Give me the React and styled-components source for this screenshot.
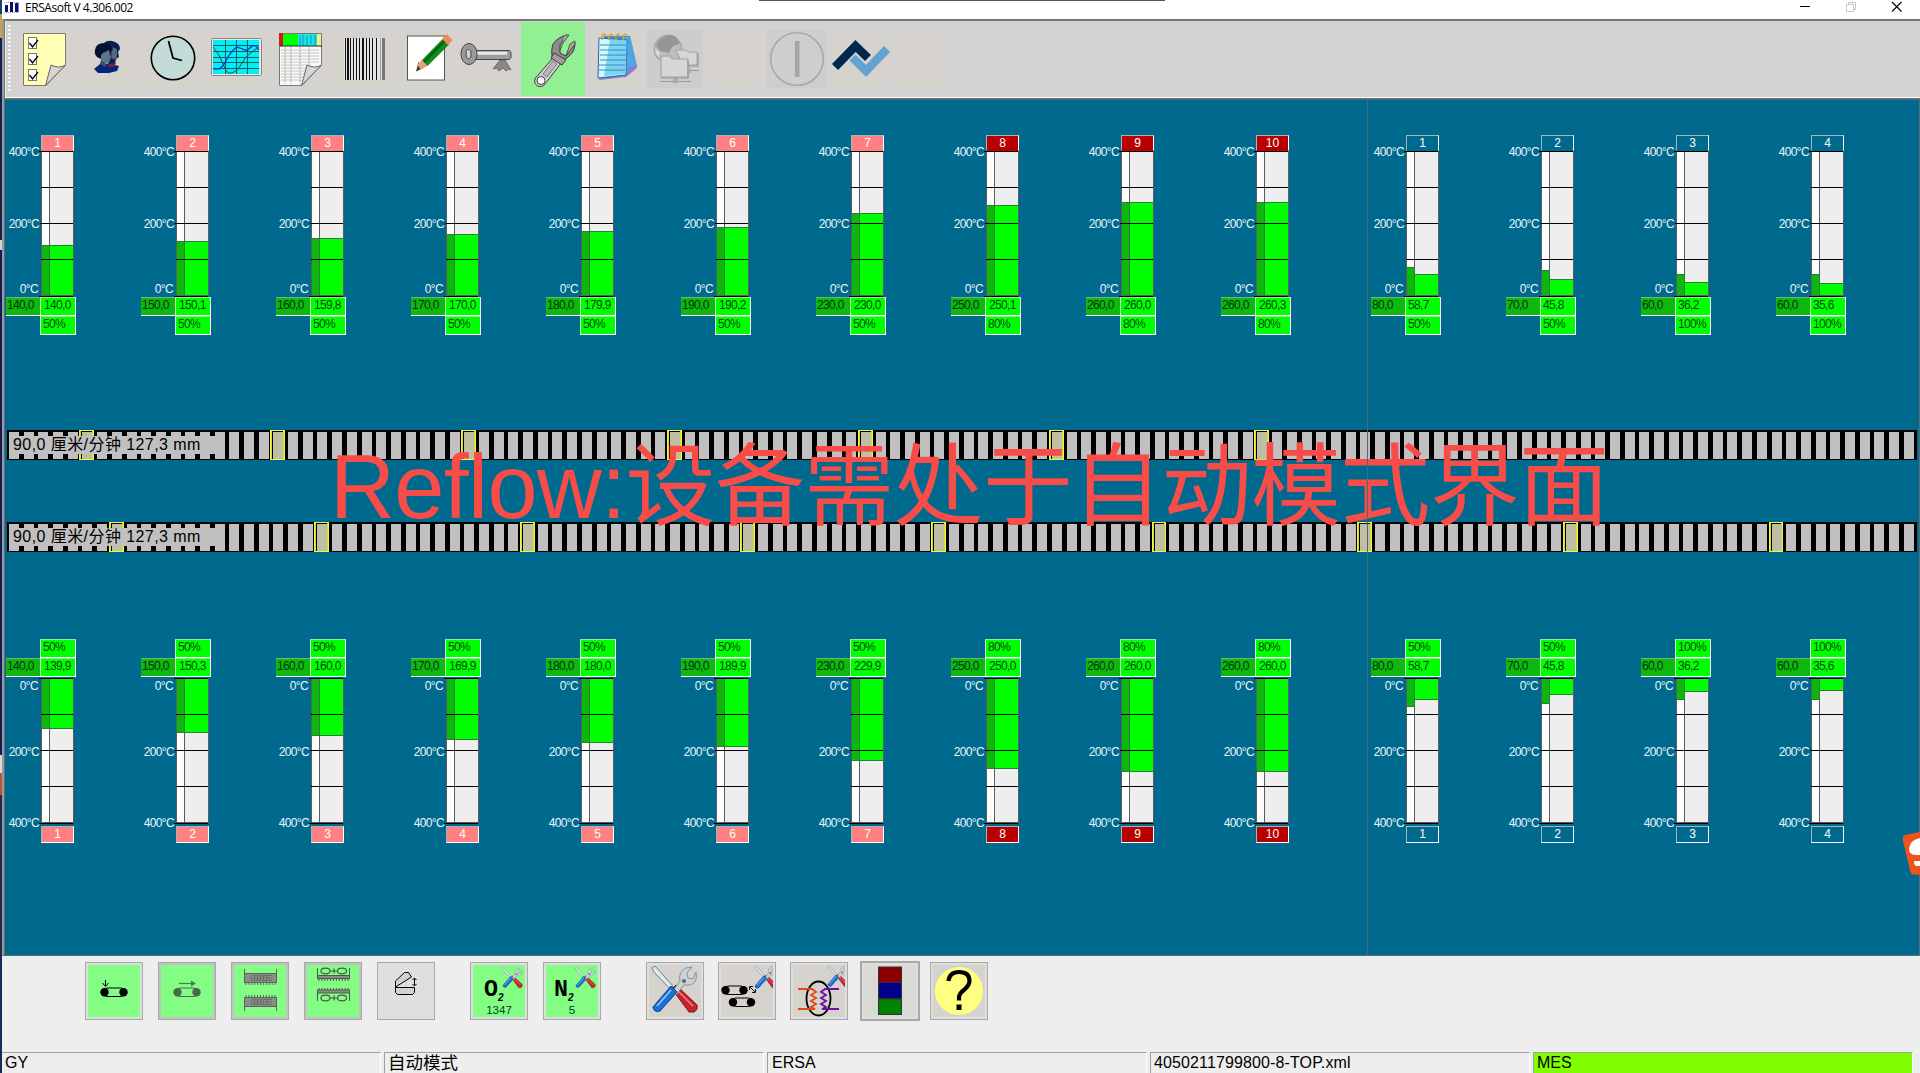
import React from "react";
import styled, { createGlobalStyle, css } from "styled-components";

const Global = createGlobalStyle`
  * { box-sizing: border-box; }
  html, body { margin: 0; padding: 0; overflow: hidden; }
  body { font-family: "Liberation Sans", "Noto Sans CJK SC", sans-serif; color: #000; }
  svg { display: block; }
`;

/* ---------- shell ---------- */
const Screen = styled.div`
  position: relative;
  display: flex;
  width: 1920px;
  height: 1073px;
  overflow: hidden;
  background: #eee;
`;
const DesktopEdge = styled.div`
  display: flex;
  flex-direction: column;
  width: 2px;
  flex: none;
`;
const EdgePart = styled.div`
  height: ${(p) => p.$h}px;
  background: ${(p) => p.$c};
`;
const Window = styled.div`
  display: flex;
  flex-direction: column;
  flex: 1;
  min-width: 0;
`;
const TitleBar = styled.header`
  display: flex;
  align-items: center;
  height: 19px;
  padding: 0 17px 5px 2px;
  background: #fff;
`;
const Title = styled.span`
  flex: 1;
  margin-left: 5px;
  padding-top: 2px;
  font: 12px/14px "Open Sans", sans-serif;
  letter-spacing: -0.46px;
`;
const WindowControls = styled.div`
  display: flex;
  gap: 34px;
`;
const HiddenTab = styled.div`
  position: absolute;
  top: 0;
  left: 759px;
  width: 406px;
  height: 1px;
  background: #555;
`;
const Framed = styled.div`
  display: flex;
  flex-direction: column;
  flex: none;
  height: 937px;
  border-left: 2px solid #9a9a9a;
  border-top: 1px solid #777;
  border-bottom: 1px solid #5d6b72;
`;

/* ---------- toolbar ---------- */
const Toolbar = styled.nav`
  display: flex;
  align-items: flex-start;
  height: 80px;
  padding: 1px 0 0 3px;
  background: #d3d3d3;
  border-left: 1px solid #777;
  border-top: 1px solid #777;
  border-bottom: 2px solid #5d6b72;
  box-shadow: inset 0 -1px 0 #fff, inset 1px 0 0 #eee;
`;
const Grip = styled.div`
  width: 3px;
  height: 68px;
  margin-top: 3px;
  margin-right: 3px;
  background: repeating-linear-gradient(#f3f3f3 0 2px, #cfcfcf 2px 4px);
`;
const Slot = styled.div`
  flex: none;
  width: ${(p) => p.$w}px;
  height: 74px;
  margin-right: ${(p) => p.$gap}px;
  background: ${(p) => (p.$active ? "#92f092" : "transparent")};
  ${(p) =>
    !p.$active &&
    css`
      background: linear-gradient(${p.$tone}, ${p.$tone}) 0 8px / 100% 58px no-repeat;
    `}
`;

/* ---------- process canvas ---------- */
const Canvas = styled.main`
  position: relative;
  flex: 1;
  padding: 35px 0 0 1px;
  background: #006a8e;
  border-left: 1px solid #5d6b72;
  border-right: 1px solid #5d6b72;
`;
const ZoneRow = styled.section`
  display: flex;
  height: ${(p) => p.$h}px;
  margin-top: ${(p) => p.$mt || 0}px;
`;
const CoolingGroup = styled.div`
  display: flex;
  margin-left: 15px;
`;
const GaugeBox = styled.div`
  display: flex;
  flex-direction: ${(p) => (p.$flip ? "column-reverse" : "column")};
  flex: none;
  width: 135px;
`;
const ZoneTag = styled.div`
  width: 33px;
  height: ${(p) => (p.$flip ? 17 : 16)}px;
  margin: ${(p) => (p.$flip ? "3px 0 0 35px" : "0 0 0 35px")};
  background: ${(p) => p.$bg};
  border: 1px solid #fff;
  border-color: #a9b4ba #fff ${(p) => (p.$flip ? "#fff" : "transparent")} #a9b4ba;
  color: #fff;
  font-size: 12px;
  line-height: 15px;
  text-align: center;
`;
const GaugeBody = styled.div`
  display: flex;
  height: 145px;
`;
const Scale = styled.div`
  display: flex;
  flex-direction: ${(p) => (p.$flip ? "column-reverse" : "column")};
  justify-content: space-between;
  width: 35px;
  margin: ${(p) => (p.$flip ? "2px 0 -7px" : "-5px 0 0")};
`;
const ScaleText = styled.span`
  height: 13px;
  padding-right: ${(p) => (p.$zero ? 3 : 2)}px;
  margin: ${(p) => p.$m || "0"};
  color: #eaf6fa;
  font-size: 12px;
  line-height: 13px;
  letter-spacing: -0.65px;
  text-align: right;
  white-space: nowrap;
`;
const Bar = styled.div`
  position: relative;
  display: flex;
  align-items: ${(p) => (p.$flip ? "flex-start" : "flex-end")};
  width: 33px;
  background: linear-gradient(90deg, #fff 7px, #5c5c5c 7px 8px, #eee 8px);
  border: 1px solid #5c5c5c;
  border-width: ${(p) => (p.$flip ? "1px 1px 1px" : "0 1px 1px")};
`;
const Fill = styled.div`
  width: ${(p) => p.$w}px;
  background: ${(p) => p.$c};
  border: 0 solid #2f7a3a;
  border-width: ${(p) => (p.$flip ? "0 0 1px" : "1px 0 0")};
  border-right-width: ${(p) => (p.$line ? 1 : 0)}px;
`;
const Tick = styled.i`
  position: absolute;
  right: 0;
  left: ${(p) => -p.$out}px;
  top: ${(p) => p.$y}px;
  height: 1px;
  background: #000;
`;
const Readings = styled.div`
  display: flex;
  height: 19px;
  margin: ${(p) => (p.$flip ? "0 0 1px" : "1px 0 0")};
`;
const Setpoint = styled.div`
  width: 34px;
  height: 19px;
  padding-left: 1px;
  background: #0fb80f;
  border-top: 1px solid #77b377;
  border-bottom: 1px solid #fff;
  color: #02360a;
  font-size: 12px;
  line-height: 15px;
  letter-spacing: -0.65px;
  white-space: nowrap;
`;
const Reading = styled.div`
  width: 36px;
  height: 19px;
  padding-left: ${(p) => p.$pad}px;
  margin-left: ${(p) => p.$ml || 0}px;
  background: #00ff00;
  border: 1px solid #fff;
  border-top-color: #9fdf9f;
  border-left-color: #c9efc9;
  color: #034a0b;
  font-size: 12px;
  line-height: 15px;
  letter-spacing: -0.65px;
  white-space: nowrap;
`;

const Belt = styled.section`
  position: relative;
  display: flex;
  width: 1910px;
  height: 30px;
  margin-top: ${(p) => p.$mt}px;
  margin-left: 1px;
  overflow: hidden;
  background: #000;
`;
const Slat = styled.div`
  flex: none;
  width: 14.6875px;
  height: 30px;
  padding: 2px 1.5px 1px 3px;
  &:first-child { margin-left: -1px; }
  &::before {
    content: "";
    display: block;
    width: 10px;
    height: 27px;
    background: #c0c0c0;
  }
  ${(p) =>
    p.$tray &&
    css`
      border: 1px solid #f1f53c;
      box-shadow: inset 1px 0 0 #d6da3a, inset -1px 0 0 #d6da3a;
      padding: 1px 1px 0 2px;
      &::before { width: 10px; background: #bfbfa6; }
    `}
`;
const BeltLabel = styled.div`
  position: absolute;
  left: 2px;
  top: 6px;
  width: 216px;
  height: 18px;
  padding-left: 4px;
  background: #c0c0c0;
  font-size: 16px;
  line-height: 17px;
  letter-spacing: 0.43px;
  white-space: pre;
`;
const Divider = styled.div`
  position: absolute;
  left: 1362px;
  top: 0;
  bottom: 0;
  width: 1px;
  background: #47697a;
`;
const Headline = styled.div`
  position: absolute;
  left: 325px;
  top: 332px;
  color: #f84c48;
  font-size: 90px;
  line-height: 110px;
  letter-spacing: -0.65px;
  white-space: nowrap;
`;
const FloatingBadge = styled.div`
  position: absolute;
  left: 1901px;
  top: 831px;
  width: 19px;
  height: 46px;
`;

/* ---------- bottom ---------- */
const Actions = styled.nav`
  display: flex;
  align-items: center;
  height: 96px;
  padding: 0 0 26px 83px;
  background: #eee;
`;
const Action = styled.button`
  position: relative;
  flex: none;
  width: ${(p) => (p.$pressed ? 60 : 58)}px;
  height: ${(p) => (p.$pressed ? 60 : 58)}px;
  margin: 0 ${(p) => p.$gap}px 0 0;
  padding: 0;
  background: ${(p) => p.$bg};
  border: ${(p) => (p.$pressed ? 2 : 1)}px solid #a8a8a8;
  box-shadow: inset 0 0 0 2px ${(p) => p.$rim || "#dedede"};
`;
const ActionValue = styled.span`
  position: absolute;
  left: 0;
  right: 0;
  bottom: 2px;
  font: 11.5px/14px "Liberation Sans", sans-serif;
  text-align: center;
  color: #042;
`;
const StatusBar = styled.footer`
  display: flex;
  gap: 3px;
  height: 21px;
  padding-right: 7px;
  background: #eee;
`;
const StatusCell = styled.div`
  flex: none;
  width: ${(p) => p.$w}px;
  padding-left: ${(p) => p.$pad || 4}px;
  background: ${(p) => p.$bg || "#eee"};
  border-top: 1px solid #a0a0a0;
  border-left: ${(p) => (p.$first ? 0 : 1)}px solid #a0a0a0;
  border-right: 1px solid #fff;
  font-size: ${(p) => p.$size || 16}px;
  line-height: 20px;
  letter-spacing: ${(p) => p.$track || 0}px;
  white-space: nowrap;
`;

/* ---------- toolbar icons, drawn in window coordinates ---------- */
const ChecklistIcon = () => (
  <g>
    <path d="M23.500 33.500H65.500V65L46 85.500H23.500Z" fill="#ffffb5" stroke="#777" />
    <path d="M45.500 85.500L51 65Q59 69 65.500 65Z" fill="#d6d6d6" stroke="#666" />
    {[38, 54, 70].map((y) => (
      <g key={y}>
        <rect x="28.500" y={y - 0.5} width="8" height="11" fill="#fff" stroke="#777" />
        <path d={`M29.500 ${y + 5}l3 4l5.500-7`} fill="none" stroke="#000" strokeWidth="1.300" />
      </g>
    ))}
  </g>
);
const UsersIcon = () => (
  <g>
    <path d="M104 43q4-4 11-1q5 2 5 7l-2 3l1 5l-3 2l-1 5h-7Z" fill="#0b1f4c" />
    <path d="M112 47l5 2l0 8l-3 3l-3-3Z" fill="#51677c" />
    <path d="M95 50q1-7 9-7q8 0 9 7l-4 1l-2 3l-3-1l-3 6l-4-2q-3-3-2-7Z" fill="#041335" />
    <path d="M103 53l6-3l1 5l1 2l-2 6l-4 1l-4-3v-6Z" fill="#5c7488" />
    <path d="M94 69l6-5h10l9 2l-2 5l-8 2h-11Z" fill="#03257c" />
    <path d="M109 64l7-1l-2 4h-6Z" fill="#8a1738" />
    <path d="M101 60l6 5l-2 2l-5-3Z" fill="#3a5060" />
  </g>
);
const ClockIcon = () => (
  <g>
    <circle cx="173" cy="58" r="21.700" fill="#c4dcd8" stroke="#000" strokeWidth="1.600" />
    <path d="M168.500 41L173 58L182 60.500" fill="none" stroke="#000" strokeWidth="1.800" />
  </g>
);
const ChartIcon = () => (
  <g>
    <rect x="211.500" y="38.500" width="50" height="37" rx="1" fill="#e8e8e8" stroke="#888" />
    <rect x="213" y="40" width="46" height="34" fill="#00f0f6" />
    <path d="M213 45.500h46M213 51.500h46M213 57.500h46M213 62.500h46M213 68.500h46M225.500 40v34M236.500 40v34M247.500 40v34" stroke="#1c5a5e" fill="none" />
    <path d="M213 47q6 6 10 17t8 9q6-1 11-10t17-16" fill="none" stroke="#444" />
    <path d="M213 69h6q4-2 8-10t10-12q6 2 8 3t6-3t8 3" fill="none" stroke="#0a2ed0" strokeWidth="1.200" />
  </g>
);
const SheetIcon = () => (
  <g>
    <path d="M279.500 33.500H321.500V65L302 85.500H279.500Z" fill="#fafafa" stroke="#777" />
    <rect x="279" y="33" width="4" height="13" fill="#d01818" />
    <rect x="283" y="34" width="15" height="12" fill="#00ff00" />
    <rect x="298" y="34" width="19" height="12" fill="#15e6ee" />
    <rect x="317" y="34" width="4" height="12" fill="#f5f080" />
    <path d="M300 36v9M303 35v10M307 36v9M311 35v9M315 35v10" stroke="#2b6a80" strokeWidth=".7" />
    <path d="M280 46h42" stroke="#222" />
    <path d="M281 50h38M281 53h38M281 56h38M281 59h38M281 62h38M281 65h30M281 68h26M281 71h25M281 74h24M281 77h23M281 80h22" stroke="#c4c4c4" />
    <path d="M285 47v37M291 47v37M300 47v37M309 47v18" stroke="#a8a8a8" strokeDasharray="2 1" />
    <path d="M301.500 85.500L307 65Q315 69 321.500 65Z" fill="#d6d6d6" stroke="#666" />
  </g>
);
const BarcodeIcon = () => (
  <g>
    <rect x="344" y="38" width="41" height="42" fill="#e4e4e4" />
    {[[345, 1], [347, 2], [350, 1], [353, 1], [356, 1], [359, 1], [362, 2], [366, 1], [369, 1], [372, 1], [376, 1]].map(([x, w]) => (
      <rect key={x} x={x} y="38" width={w} height="42" fill="#111" />
    ))}
    <rect x="380" y="38" width="1" height="42" fill="#999" />
    <rect x="382" y="38" width="3" height="42" fill="#777" />
  </g>
);
const NoteIcon = () => (
  <g>
    <rect x="407.500" y="36" width="37" height="44" fill="#fff" stroke="#555" />
    <path d="M416 71.500L418.500 62L423.500 68Z" fill="#333" />
    <path d="M417.500 65L422 59.500L427.500 66L420.500 69.500Z" fill="#e8a077" />
    <path d="M422 60L443 38.500L449 44.500L427.500 66Z" fill="#138a1f" />
    <path d="M424 62L445 40.500" stroke="#0a5a12" strokeWidth="2" />
    <path d="M442 39l5-5l5.500 6l-4.500 5Z" fill="#f28a55" />
  </g>
);
const KeyIcon = () => (
  <g stroke="#444">
    <path d="M474 50.500h35.500l1.500 2v5l-1.500 2H474Z" fill="#9d9d9d" />
    <path d="M474 52.500h33M474 54h33" stroke="#e6e6e6" strokeWidth="1.600" />
    <ellipse cx="469" cy="54" rx="8" ry="10.500" fill="#9a9a9a" />
    <ellipse cx="468.500" cy="54" rx="2.500" ry="4.500" fill="#d6d2ce" />
    <path d="M500 60l-7 9l4-1l2 3l4-3l3 3l3-2l2 1l-6-10Z" fill="#888" strokeWidth=".6" />
  </g>
);
const WrenchIcon = () => (
  <g stroke="#3a3a3a" strokeLinejoin="round">
    <path d="M553 58L535.500 78a5.500 5.500 0 1 0 9.500 6L562 62Z" fill="#d2cfd2" />
    <circle cx="541" cy="80.500" r="4" fill="#fff" />
    <path d="M553 61l4 3l-10 13l-4-3Z" fill="#b9b6b9" strokeWidth=".5" />
    <path d="M552 56q-1-7 1-12q5-7 14-9l-7 10l0 8l6 3l9-13q0 9-7 14l-4 3Z" fill="#8b8b8b" />
    <path d="M560 50l3-7q4-5 6-8h-4M566 56l9-12v-3l-5 3Z" fill="#aaa" strokeWidth=".8" />
    <path d="M554 53l12 7l-4 5l-11-7Z" fill="#a79c9c" />
  </g>
);
const NotebookIcon = () => (
  <g>
    <path d="M604 36L630 36L637 67L604 71Z" fill="#2b8fd0" />
    <path d="M622 37h8l7 29l-12 3Z" fill="#4fa6e0" />
    <path d="M598 79l2 1l26-3l11-9l-2-3Z" fill="#8083d0" />
    <path d="M599 38L627 40L626 75L598 78Z" fill="#d3f8ff" stroke="#2d62a8" strokeWidth="1" />
    <path d="M610 39l17 1l-1 34l-22 2Z" fill="#4cc0f0" opacity=".65" />
    <path d="M600 45h26M600 50h26M600 55h26M600 60h26M599 65h26M599 70h26" stroke="#2f86b0" strokeWidth=".9" />
    <path d="M602 40v-4q3-4 4 1M609 40v-4q3-4 4 1M616 40v-4q3-4 4 1M623 40v-4q3-4 4 1" fill="none" stroke="#d9a02c" strokeWidth="1.500" />
  </g>
);
const GlobeIcon = () => (
  <g>
    <circle cx="668" cy="49" r="14" fill="#bdbdbd" stroke="#a4a4a4" />
    <path d="M658 41q8-8 17-5l5 7l-8 4l-3 6l-9-2l-4-5Z" fill="#969696" />
    <path d="M655 49l5 4l-2 4Z" fill="#e0e0e0" />
    <path d="M676 50h10l2 2h9v13h-14Z" fill="#d6d6d6" stroke="#a4a4a4" />
    <path d="M661 58q0-2 2-2h7l2 3h16v18h-27Z" fill="#d6d6d6" stroke="#a0a0a0" />
    <path d="M688 60v18h-27M698 53v13h-10" fill="none" stroke="#959595" strokeWidth="1.200" />
    <path d="M690 70.500h9M690 68v5M660 81.500h31M675.500 77v4" stroke="#999" />
    <rect x="673" y="79" width="5" height="4" fill="#aaa" />
  </g>
);
const PowerIcon = () => (
  <g>
    <circle cx="797" cy="59" r="26.300" fill="none" stroke="#a8a8a8" strokeWidth="1.600" />
    <rect x="795" y="41" width="4.500" height="36" fill="#a5a5a5" />
  </g>
);
const LogoIcon = () => (
  <g fill="none" strokeWidth="8.500">
    <path d="M835 67L855.500 46L868 58" stroke="#00284f" />
    <path d="M852.500 57.500L866 71L887 49" stroke="#62a3d1" />
  </g>
);
const EmptyIcon = () => null;

const WARM = "#d6d2ce";
const TOOLS = [
  { x: 14, w: 63, gap: 1, icon: ChecklistIcon },
  { x: 78, w: 63, gap: 1, icon: UsersIcon },
  { x: 142, w: 63, gap: 1, icon: ClockIcon },
  { x: 206, w: 64, gap: 1, icon: ChartIcon },
  { x: 271, w: 63, gap: 1, icon: SheetIcon },
  { x: 335, w: 63, gap: 1, icon: BarcodeIcon },
  { x: 399, w: 57, gap: 2, icon: NoteIcon },
  { x: 458, w: 61, gap: 2, icon: KeyIcon },
  { x: 521, w: 64, gap: 3, icon: WrenchIcon, active: true },
  { x: 588, w: 56, gap: 3, icon: NotebookIcon },
  { x: 647, w: 56, gap: 5, icon: GlobeIcon, tone: "#cdcdcd" },
  { x: 708, w: 54, gap: 5, icon: EmptyIcon },
  { x: 767, w: 60, gap: 5, icon: PowerIcon, tone: "#cecece" },
  { x: 832, w: 58, gap: 5, icon: LogoIcon },
  { x: 895, w: 54, gap: 0, icon: EmptyIcon },
];

/* ---------- action icons ---------- */
const Tools = ({ x, y, s }) => (
  <g transform={`translate(${x} ${y}) scale(${s})`}>
    <path d="M1 3l3-2l18 20l-3 3L3 7Z" fill="#dfe6e8" stroke="#6b8388" strokeWidth="1" />
    <path d="M21 24l4-4l21 20q1 5-3 7l-5 0Z" fill="#c8202c" stroke="#7b1520" />
    <path d="M25 24l17 17" stroke="#f09080" strokeWidth="1.500" />
    <path d="M21 27L29 16q-2-9 6-13l6-1l-5 6l1 5l5 1l3-7q2 11-6 13l-6 0L25 30Z" fill="#cbd2d5" stroke="#7b8c90" strokeWidth=".9" />
    <circle cx="33" cy="16" r="2" fill="#5a6568" />
    <path d="M20 21l6 6L9 46q-6 2-7-4Z" fill="#1b6fd8" stroke="#0c3b8a" />
    <path d="M20 25L6 41" stroke="#8fc4f5" strokeWidth="1.600" />
  </g>
);
const Conveyor = ({ x, y, w, c = "#000" }) => (
  <g>
    <rect x={x + 3} y={y} width={w - 6} height="8.500" rx="4" fill="none" stroke={c} />
    <circle cx={x + 4.5} cy={y + 4.3} r="4.200" fill={c} />
    <circle cx={x + w - 4.5} cy={y + 4.3} r="4.200" fill={c} />
  </g>
);
const comb = (x, y, n, step, h) =>
  Array.from({ length: n }, (_, i) => `M${x + i * step} ${y}v${h}`).join("");

const ConveyorInIcon = () => (
  <g>
    <path d="M105.500 980v6M102.500 983l3 3.500l3-3.500" fill="none" stroke="#000" />
    <Conveyor x={100} y={988} w={28} />
  </g>
);
const ConveyorRunIcon = () => (
  <g>
    <path d="M179 983.500h14" stroke="#4b7a4b" strokeWidth="1.200" />
    <path d="M191 980.500l5 3l-5 3Z" fill="#4b7a4b" />
    <Conveyor x={173} y={988} w={28} c="#4a684a" />
  </g>
);
const HeaterIcon = () => (
  <g stroke="#5a665a" fill="none">
    <path d="M244.500 969v14M276.500 969v14M244.500 997v14M276.500 997v14" />
    <rect x="244.500" y="973.500" width="32" height="9" fill="#8c8c8c" />
    <rect x="244.500" y="997.500" width="32" height="9" fill="#8c8c8c" />
    <path d={comb(246, 983, 11, 2.9, 2) + comb(246, 995, 11, 2.9, 2)} />
    {[978, 1002].map((y) => (
      <g key={y} strokeWidth=".7">
        {[253, 256, 259, 262, 265].map((x) => (
          <ellipse key={x} cx={x} cy={y} rx="2" ry="2.800" />
        ))}
        <path d={`M266 ${y - 2.500}h6M266 ${y}h6M266 ${y + 2.500}h6`} />
      </g>
    ))}
  </g>
);
const FanIcon = () => (
  <g stroke="#4a5a4a" fill="none">
    <path d="M317.500 968v10M349.500 968v10M317.500 991v10M349.500 991v10" />
    <rect x="317.500" y="975.500" width="32" height="3" fill="#8c8c8c" />
    <rect x="317.500" y="990" width="32" height="3" fill="#8c8c8c" />
    <path d={comb(319, 979, 11, 2.9, 2) + comb(319, 988, 11, 2.9, 2)} />
    {[971, 998].map((y) => (
      <g key={y} strokeWidth="1.200">
        <ellipse cx="325.500" cy={y} rx="4.500" ry="2.800" />
        <ellipse cx="342" cy={y} rx="4.500" ry="2.800" />
        <path d={`M330 ${y}h8M334 ${y - 2.500}v5`} />
      </g>
    ))}
  </g>
);
const HoodIcon = () => (
  <g stroke="#000" fill="#d2d2d2">
    <path d="M395.500 987.500h19v5l-2 2h-15l-2-2Z" />
    <path d="M395.500 987v-6l9-8.500h4l3 4.500Z" />
    <path d="M414.500 978.500v7M412.500 980l2-2l2 2M412.500 984l2 2l2-2" fill="none" />
  </g>
);
const GlyphTools = ({ x, glyph, gx }) => (
  <g>
    <text x={gx} y="996" fontFamily="Liberation Mono" fontWeight="700" fontSize="24" textLength="14" lengthAdjust="spacingAndGlyphs">{glyph}</text>
    <text x={gx + 14} y="1000.500" fontFamily="Liberation Sans" fontStyle="italic" fontWeight="700" fontSize="10">2</text>
    <Tools x={x} y={967} s={0.44} />
  </g>
);
const OxygenIcon = () => <GlyphTools x={502} gx={484} glyph="O" />;
const NitrogenIcon = () => <GlyphTools x={575} gx={554} glyph="N" />;
const ServiceIcon = () => <Tools x={651} y={965} s={1} />;
const ConveyorSetupIcon = () => (
  <g>
    <Conveyor x={721} y={986} w={27} />
    <Conveyor x={728.500} y={998} w={27} />
    <path d="M750 987l5 5M749.500 990v-3.500h3.500M755.500 989v3.500h-3.500" fill="none" stroke="#000" strokeWidth=".9" />
    <svg x="753" y="965" width="20" height="24" viewBox="753 965 20 24">
      <Tools x={754} y={965} s={0.5} />
    </svg>
  </g>
);
const ExchangerIcon = () => (
  <g fill="none">
    <ellipse cx="818.500" cy="998.500" rx="12" ry="17" stroke="#000" strokeWidth="1.800" />
    <path d="M798 989h14l4 3l-5 3l5 3l-5 3l5 3l-5 3l4 2h-17" stroke="#e04a12" strokeWidth="1.800" />
    <path d="M839 989h-14l-4 3l5 3l-5 3l5 3l-5 3l5 3l-4 2h17" stroke="#6a10a8" strokeWidth="1.800" />
    <svg x="825" y="965" width="20" height="22" viewBox="825 965 20 22">
      <Tools x={827} y={965} s={0.46} />
    </svg>
  </g>
);
const SignalIcon = () => (
  <g stroke="#333">
    <rect x="878.500" y="967" width="23" height="15.500" fill="#8a0000" />
    <rect x="878.500" y="982.500" width="23" height="16" fill="#00008a" />
    <rect x="878.500" y="999" width="23" height="15.500" fill="#008400" />
  </g>
);
const HelpIcon = () => (
  <g>
    <circle cx="959" cy="991" r="24" fill="#ffff80" />
    <path d="M948.500 981q1-9 10.500-9q10.500 0 10.500 9q0 4-5 8.500q-5.500 4-5.500 8v3" fill="none" stroke="#000" strokeWidth="4.200" />
    <rect x="956.500" y="1004.500" width="5" height="5.500" fill="#000" />
  </g>
);

const GREEN = "#84fd84";
const ACTIONS = [
  { x: 85, gap: 15, bg: GREEN, icon: ConveyorInIcon },
  { x: 158, gap: 15, bg: GREEN, rim: "#c0c4c0", icon: ConveyorRunIcon },
  { x: 231, gap: 15, bg: GREEN, rim: "#c0c4c0", icon: HeaterIcon },
  { x: 304, gap: 15, bg: GREEN, rim: "#c0c4c0", icon: FanIcon },
  { x: 377, gap: 35, bg: "#dfdfdf", icon: HoodIcon },
  { x: 470, gap: 15, bg: GREEN, icon: OxygenIcon, value: "1347" },
  { x: 543, gap: 45, bg: GREEN, icon: NitrogenIcon, value: "5" },
  { x: 646, gap: 14, bg: WARM, icon: ServiceIcon },
  { x: 718, gap: 14, bg: WARM, icon: ConveyorSetupIcon },
  { x: 790, gap: 12, bg: WARM, icon: ExchangerIcon },
  { x: 860, gap: 10, bg: "#d9d9d5", icon: SignalIcon, pressed: true },
  { x: 930, gap: 0, bg: WARM, icon: HelpIcon },
];

/* ---------- zone data: label, setpoint, upper, lower, fan ---------- */
const HEATING = [
  [1, "140,0", "140,0", "139,9", "50%"],
  [2, "150,0", "150,1", "150,3", "50%"],
  [3, "160,0", "159,8", "160,0", "50%"],
  [4, "170,0", "170,0", "169,9", "50%"],
  [5, "180,0", "179,9", "180,0", "50%"],
  [6, "190,0", "190,2", "189,9", "50%"],
  [7, "230,0", "230,0", "229,9", "50%"],
  [8, "250,0", "250,1", "250,0", "80%"],
  [9, "260,0", "260,0", "260,0", "80%"],
  [10, "260,0", "260,3", "260,0", "80%"],
];
const COOLING = [
  [1, "80,0", "58,7", "58,7", "50%"],
  [2, "70,0", "45,8", "45,8", "50%"],
  [3, "60,0", "36,2", "36,2", "100%"],
  [4, "60,0", "35,6", "35,6", "100%"],
];
const toPx = (t) => Math.floor(parseFloat(t.replace(",", ".")) * 0.36);

function Gauge({ zone, flip, cooling }) {
  const [no, set, upper, lower, fan] = zone;
  const actual = flip ? lower : upper;
  const bg = cooling ? "transparent" : no > 7 ? "#b80000" : "#ff8080";
  const ys = flip ? [35, 71, 107] : [36, 72, 108];
  return (
    <GaugeBox $flip={flip}>
      <ZoneTag $flip={flip} $bg={bg}>{no}</ZoneTag>
      <GaugeBody>
        <Scale $flip={flip}>
          <ScaleText>400°C</ScaleText>
          <ScaleText $m={flip ? "0 0 6px" : "7px 0 0"}>200°C</ScaleText>
          <ScaleText $zero>0°C</ScaleText>
        </Scale>
        <Bar $flip={flip}>
          <Fill $flip={flip} $w={8} $c="#0cb80c" $line style={{ height: toPx(set) }} />
          <Fill $flip={flip} $w={23} $c="#00ff00" style={{ height: toPx(actual) }} />
          <Tick $out={3} $y={flip ? -1 : 0} />
          {ys.map((y, i) => (
            <Tick key={y} $out={i === 1 ? 2 : 1} $y={y} />
          ))}
          <Tick $out={3} $y={flip ? 144 : 145} />
        </Bar>
      </GaugeBody>
      <Readings $flip={flip}>
        <Setpoint>{set}</Setpoint>
        <Reading $pad={cooling ? 2 : 3}>{actual}</Reading>
      </Readings>
      <Reading $pad={2} $ml={34}>{fan}</Reading>
    </GaugeBox>
  );
}

function Zones({ flip, mt }) {
  return (
    <ZoneRow $h={flip ? 204 : 200} $mt={mt}>
      {HEATING.map((z) => <Gauge key={z[0]} zone={z} flip={flip} />)}
      <CoolingGroup>
        {COOLING.map((z) => <Gauge key={z[0]} zone={z} flip={flip} cooling />)}
      </CoolingGroup>
    </ZoneRow>
  );
}

const SLATS = Array.from({ length: 130 }, (_, i) => i);
function Conveyance({ trays, mt }) {
  return (
    <Belt $mt={mt}>
      {SLATS.map((i) => <Slat key={i} $tray={trays.includes(i)} />)}
      <BeltLabel>90,0 厘米/分钟 127,3 mm</BeltLabel>
    </Belt>
  );
}

export default function App() {
  return (
    <Screen>
      <Global />
      <DesktopEdge>
        <EdgePart $h={14} $c="#1b3d72" />
        <EdgePart $h={24} $c="#c9a04a" />
        <EdgePart $h={202} $c="#12204f" />
        <EdgePart $h={10} $c="#cfd2d6" />
        <EdgePart $h={505} $c="#141c58" />
        <EdgePart $h={18} $c="#d8d8d8" />
        <EdgePart $h={22} $c="#b5573a" />
        <EdgePart $h={278} $c="#182a58" />
      </DesktopEdge>
      <Window>
        <TitleBar>
          <svg width="16" height="13" viewBox="4 1 16 13">
            <path d="M4 2.500h16M4 12.500h16" stroke="#999" strokeDasharray="1 1" />
            <path d="M5 5h3v7H5zM10 2h3v10h-3zM15 3h3.500v9H15z" fill="#0a0a78" />
          </svg>
          <Title>ERSAsoft V 4.306.002</Title>
          <WindowControls>
            <svg width="12" height="12"><path d="M1 5.500h10" stroke="#000" /></svg>
            <svg width="12" height="12"><path d="M1.500 3.500h7v7h-7ZM3.500 3.500v-2h7v7h-2" fill="none" stroke="#c6c6c6" /></svg>
            <svg width="12" height="12"><path d="M1 1l9.500 9.500M10.500 1L1 10.500" stroke="#000" strokeWidth="1.100" /></svg>
          </WindowControls>
        </TitleBar>
        <Framed>
          <Toolbar>
            <Grip />
            {TOOLS.map(({ x, w, gap, icon: Icon, active, tone }) => (
              <Slot key={x} $w={w} $gap={gap} $active={active} $tone={tone || WARM}>
                <svg width={w} height="74" viewBox={`${x} 22 ${w} 74`} overflow="visible"><Icon /></svg>
              </Slot>
            ))}
          </Toolbar>
          <Canvas>
            <Zones />
            <Conveyance mt={95} trays={[5, 18, 31, 45, 58, 71, 85]} />
            <Conveyance mt={62} trays={[7, 21, 35, 50, 63, 78, 92, 106, 120]} />
            <Zones flip mt={87} />
            <Headline>Reflow:设备需处于自动模式界面</Headline>
            <Divider />
          </Canvas>
        </Framed>
        <Actions>
          {ACTIONS.map(({ x, gap, bg, rim, icon: Icon, value, pressed }) => (
            <Action key={x} $gap={gap} $bg={bg} $rim={rim} $pressed={pressed}>
              <svg width="56" height="56" viewBox={`${x + (pressed ? 2 : 1)} 963 56 56`}><Icon /></svg>
              {value && <ActionValue>{value}</ActionValue>}
            </Action>
          ))}
        </Actions>
        <StatusBar>
          <StatusCell $w={379} $pad={3} $first>GY</StatusCell>
          <StatusCell $w={380} $pad={3} $size={17.5}>自动模式</StatusCell>
          <StatusCell $w={380}>ERSA</StatusCell>
          <StatusCell $w={380} $pad={3} $track={0.12}>4050211799800-8-TOP.xml</StatusCell>
          <StatusCell $w={380} $pad={3} $bg="#80ff00">MES</StatusCell>
        </StatusBar>
      </Window>
      <HiddenTab />
      <FloatingBadge>
        <svg width="19" height="46" viewBox="1901 831 19 46">
          <path d="M1905 835l15-3v43l-7-0.500q-2 0-3-4l-7-30q-1-5 2-5.500Z" fill="#f0541e" />
          <path d="M1920 838q-10 2-11 11q0 6 8 6h3ZM1914 861h6v5h-3q-3 0-3-5Z" fill="#fff" />
        </svg>
      </FloatingBadge>
    </Screen>
  );
}
